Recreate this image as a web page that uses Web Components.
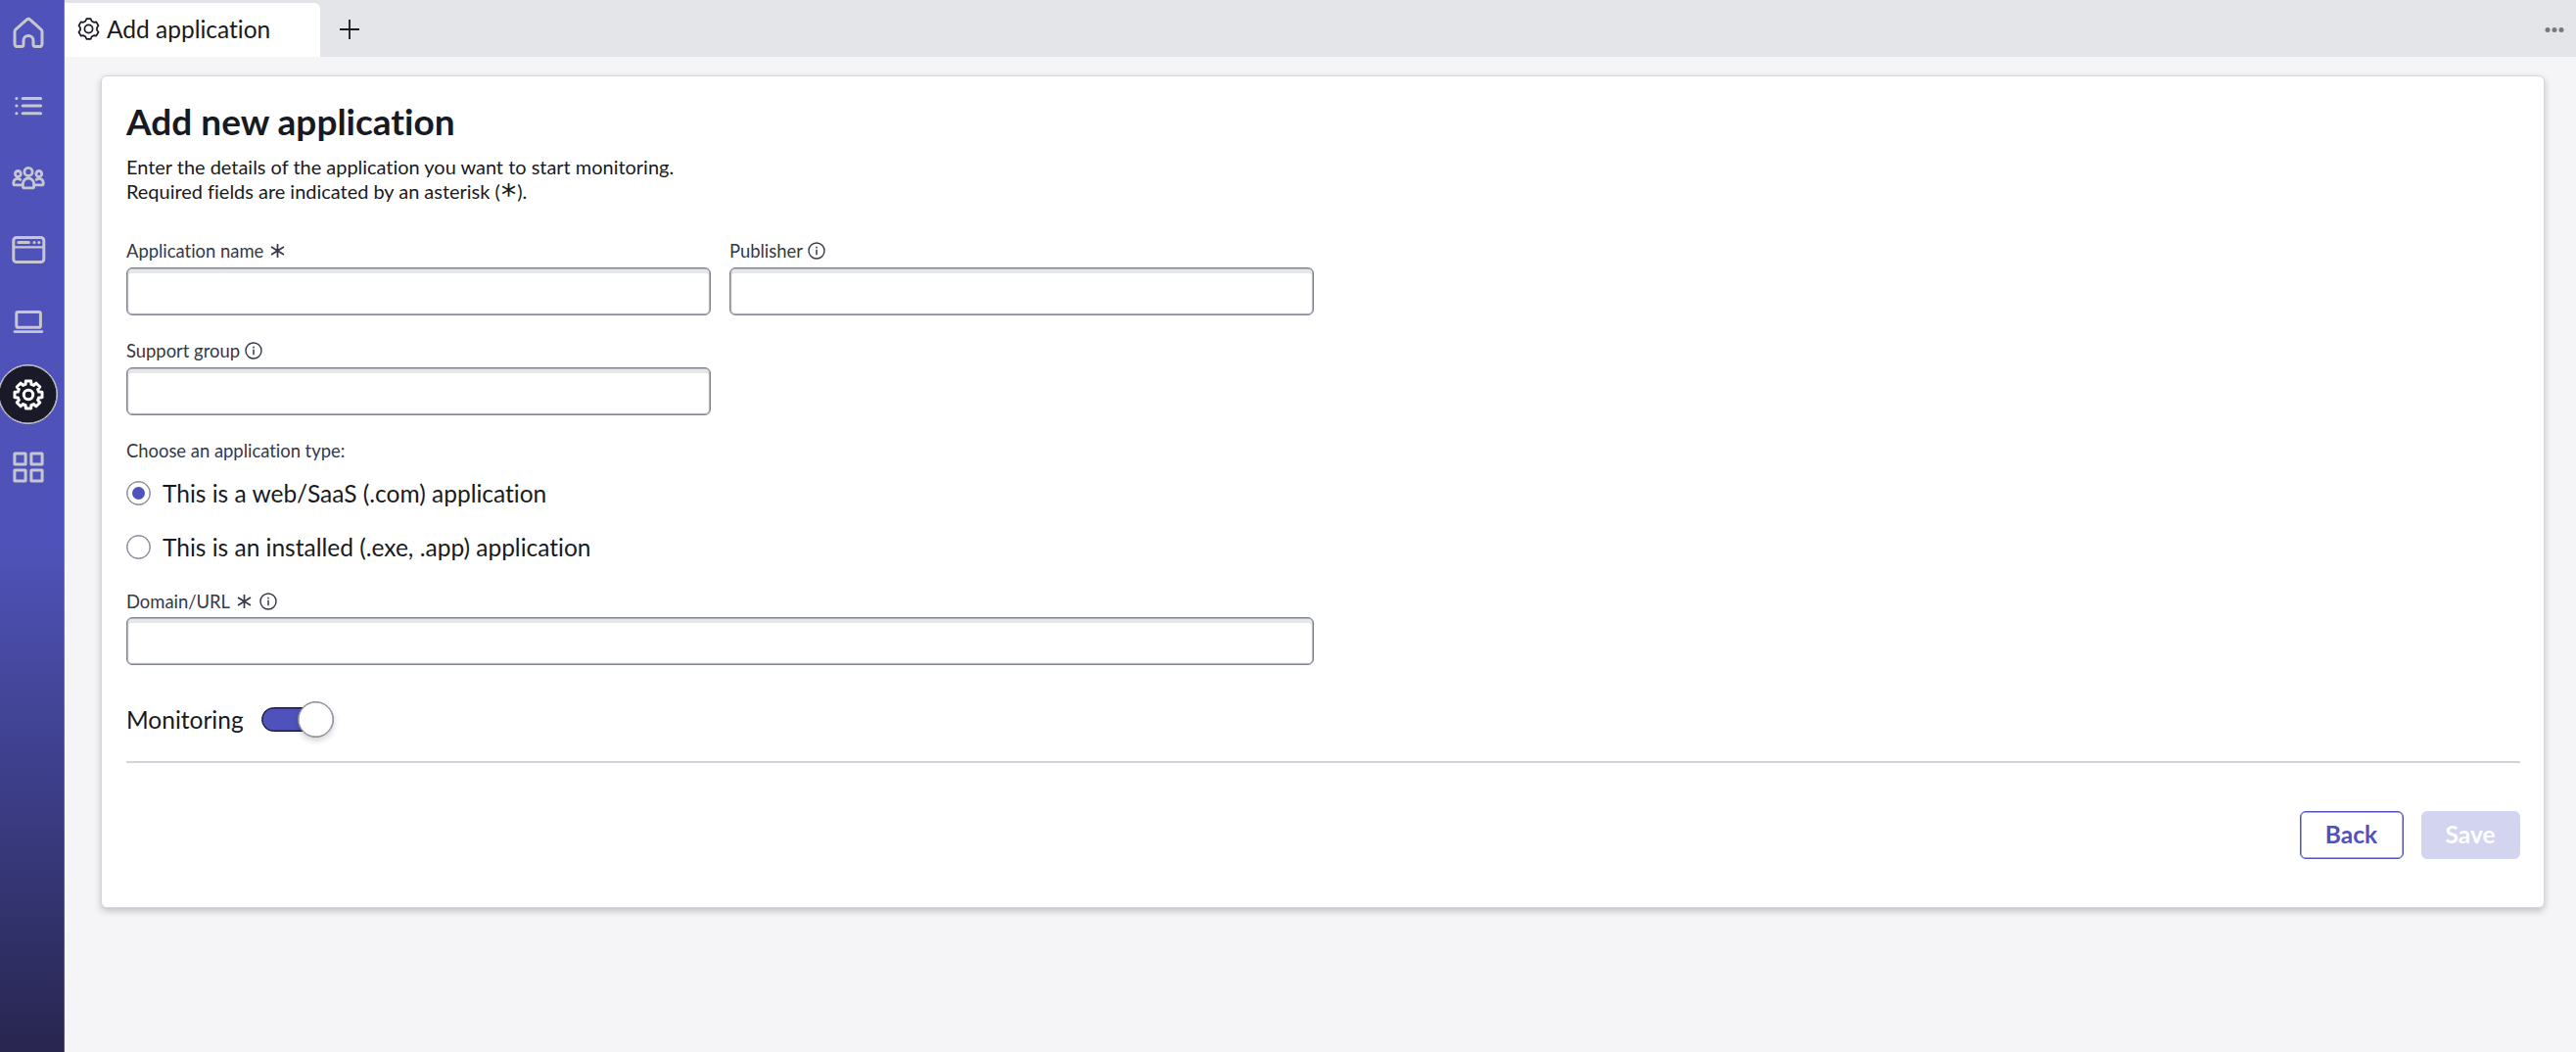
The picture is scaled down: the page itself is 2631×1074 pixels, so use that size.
<!DOCTYPE html>
<html lang="en">
<head>
<meta charset="utf-8">
<title>Add application</title>
<style>
    html, body {
        margin: 0;
        height: 100%;
        overflow: hidden;
    }
    body {
        font-family: Lato, "Liberation Sans", sans-serif;
        font-size: 24.5px;
        font-variant-ligatures: none;
        color: #181a22;
        background: #f5f5f8;
        --primary: #4f52bd;
        --line: #7f8391;
    }
</style>
</head>
<body>
<app-shell>
    <nav-rail slot="nav">
        <nav-item icon="home" label="Home"></nav-item>
        <nav-item icon="list" label="List"></nav-item>
        <nav-item icon="users" label="Users"></nav-item>
        <nav-item icon="window" label="Applications"></nav-item>
        <nav-item icon="laptop" label="Devices"></nav-item>
        <nav-item icon="gear" label="Settings" active></nav-item>
        <nav-item icon="grid" label="Dashboards"></nav-item>
    </nav-rail>
    <tab-bar slot="tabs">Add application</tab-bar>
    <form-card>
        <span slot="title">Add new application</span>
        <form-hint slot="hint"></form-hint>
        <form-row>
            <text-field label="Application name" required></text-field>
            <text-field label="Publisher" info></text-field>
        </form-row>
        <form-row>
            <text-field label="Support group" info></text-field>
        </form-row>
        <radio-list label="Choose an application type:">
            <radio-option checked>This is a web/SaaS (.com) application</radio-option>
            <radio-option>This is an installed (.exe, .app) application</radio-option>
        </radio-list>
        <form-row>
            <text-field label="Domain/URL" required info wide></text-field>
        </form-row>
        <toggle-switch>Monitoring</toggle-switch>
        <action-button slot="actions">Back</action-button>
        <action-button slot="actions" disabled>Save</action-button>
    </form-card>
</app-shell>

<script>
// closed outline of a cog, teeth spaced evenly around (c, c)
function gearPath(c, teeth, outer, root, topHalf, rootHalf) {
    var points = [];
    for (var i = 0; i < teeth; i++) {
        var a = i * 2 * Math.PI / teeth - Math.PI / 2;
        [[root, -rootHalf], [outer, -topHalf], [outer, topHalf], [root, rootHalf]].forEach(function(p) {
            var x = c + p[0] * Math.cos(a) - p[1] * Math.sin(a);
            var y = c + p[0] * Math.sin(a) + p[1] * Math.cos(a);
            points.push(x.toFixed(2) + " " + y.toFixed(2));
        });
    }
    return "M" + points.join("L") + "Z";
}

var ICONS = {
    home: `<path d="M4 16.4V29a2.6 2.6 0 0 0 2.6 2.6H11a2 2 0 0 0 2-2V25.4a5 5 0 0 1 10 0v4.2a2 2 0 0 0 2 2h4.4A2.6 2.6 0 0 0 32 29V16.4a3 3 0 0 0-1-2.2L19.8 4.2a2.7 2.7 0 0 0-3.6 0L5 14.2a3 3 0 0 0-1 2.2z"/>`,
    list: `<path d="M12.2 10.4h18.4M12.2 18h18.4M12.2 25.8h18.4M5.8 10.4h.2M5.8 18h.2M5.8 25.8h.2"/>`,
    users: `<g stroke-width="2.8"><circle cx="18" cy="12.4" r="4.1"/><circle cx="7.4" cy="14.4" r="2.9"/><circle cx="28.8" cy="14.4" r="2.9"/>
        <path d="M12.4 27.4v-2.8a5.6 5.6 0 0 1 11.2 0v2.8a1.4 1.4 0 0 1-1.4 1.4h-8.4a1.4 1.4 0 0 1-1.4-1.4zM9.8 20.4a4.2 4.2 0 0 0-7 3v1a1.4 1.4 0 0 0 1.4 1.4h7.6M26.2 20.4a4.2 4.2 0 0 1 7 3v1a1.4 1.4 0 0 1-1.4 1.4h-7.6"/></g>`,
    window: `<rect x="2.8" y="5.5" width="31" height="25" rx="3"/><path d="M3 15.4h30.6" stroke-width="2.4"/><path d="M7.8 10.4h10.6M24 10.4h.1M28.8 10.4h.1"/>`,
    laptop: `<rect x="5.8" y="7.5" width="24.6" height="15.8" rx="1.6"/><path d="M4 27.6h27.8" stroke-width="2.8"/>`,
    gear: `<path d="${gearPath(18, 8, 14, 10.7, 2.7, 2.9)}"/><circle cx="18" cy="18" r="4.7"/>`,
    grid: `<rect x="3.9" y="3.9" width="11.2" height="11.2" rx=".4"/><rect x="20.9" y="3.9" width="11.2" height="11.2" rx=".4"/><rect x="3.9" y="20.9" width="11.2" height="11.2" rx=".4"/><rect x="20.9" y="20.9" width="11.2" height="11.2" rx=".4"/>`
};

function define(name, html, setup) {
    var template = document.createElement("template");
    template.innerHTML = html;
    customElements.define(name, class extends HTMLElement {
        constructor() {
            super();
            this.attachShadow({mode: "open"}).appendChild(template.content.cloneNode(true));
        }
        connectedCallback() {
            if (setup) setup(this, this.shadowRoot);
        }
    });
}

define("app-shell", `
    <style>
        :host {
            display: grid;
            grid-template-columns: 66px 1fr;
            height: 100vh;
        }
        main {
            display: flex;
            flex-direction: column;
        }
    </style>
    <slot name="nav"></slot>
    <main><slot name="tabs"></slot><slot></slot></main>
`);

define("nav-rail", `
    <style>
        :host {
            display: flex;
            flex-direction: column;
            box-sizing: border-box;
            border-right: 1px solid rgba(255, 255, 255, .2);
            background: linear-gradient(#4f52b8 0, #4f52b8 52%, #38397c 80%, #28264f 100%);
            background-origin: border-box;
        }
        nav {
            margin-top: -3px;
        }
    </style>
    <nav><slot></slot></nav>
`);

define("nav-item", `
    <style>
        :host {
            display: flex;
            align-items: center;
            justify-content: center;
            width: 57.4px;
            height: 73.8px;
            color: #c5c6cf;
        }
        span {
            display: flex;
            align-items: center;
            justify-content: center;
            flex: none;
            box-sizing: border-box;
            width: 61px;
            height: 61px;
            border-radius: 50%;
        }
        :host([active]) span {
            color: #fff;
            background: #191927;
            border: 1px solid #d4d4de;
            box-shadow: inset 0 0 0 .5px #d4d4de;
        }
        svg {
            flex: none;
            width: 36px;
            height: 36px;
            fill: none;
            stroke: currentColor;
            stroke-width: 3;
            stroke-linecap: round;
            stroke-linejoin: round;
        }
    </style>
    <span><svg viewBox="0 0 36 36"></svg></span>
`, function(el, root) {
    root.querySelector("svg").innerHTML = ICONS[el.getAttribute("icon")];
    el.setAttribute("aria-label", el.getAttribute("label"));
});

define("tab-bar", `
    <style>
        :host {
            display: flex;
            box-sizing: border-box;
            height: 58px;
            padding-top: 3px;
            background: #e4e5e9;
        }
        .tab {
            display: flex;
            align-items: center;
            box-sizing: border-box;
            width: 261px;
            padding: 0 0 2px 13px;
            gap: 7px;
            background: #fff;
            border-radius: 0 6px 0 0;
        }
        .plus {
            margin: 16.5px 0 0 20px;
        }
        .more {
            margin: 24px 12px 0 auto;
        }
        svg {
            flex: none;
            fill: none;
            stroke: currentColor;
            stroke-linejoin: round;
        }
    </style>
    <div class="tab">
        <svg width="23" height="23" viewBox="0 0 23 23" stroke-width="1.7"><path d="${gearPath(11.5, 6, 10.3, 8, 2.2, 3.1)}"/><circle cx="11.5" cy="11.5" r="4.1"/></svg>
        <slot></slot>
    </div>
    <svg class="plus" width="20" height="20" viewBox="0 0 20 20" stroke-width="1.8"><path d="M10 0v20M0 10h20"/></svg>
    <svg class="more" width="20" height="7" viewBox="0 0 20 7"><g fill="#767780" stroke="none"><circle cx="3" cy="3.5" r="2.5"/><circle cx="10" cy="3.5" r="2.5"/><circle cx="17" cy="3.5" r="2.5"/></g></svg>
`);

define("form-card", `
    <style>
        :host {
            display: block;
            box-sizing: border-box;
            height: 850px;
            margin: 19px 32px 0 37px;
            padding: 25px 24px 0 25px;
            background: #fff;
            border: 1px solid #d5d6dd;
            border-radius: 6px;
            box-shadow: 0 3px 7px rgba(24, 26, 34, .24);
        }
        h1 {
            margin: 0;
            padding-bottom: 4px;
            font-size: 37px;
            line-height: 42px;
            font-weight: 700;
        }
        .body {
            display: flex;
            flex-direction: column;
            padding-top: 37px;
        }
        footer {
            display: flex;
            justify-content: flex-end;
            gap: 18px;
            margin-top: 24px;
            padding-top: 49px;
            border-top: 2px solid #d3d4db;
        }
    </style>
    <h1><slot name="title"></slot></h1>
    <slot name="hint"></slot>
    <div class="body"><slot></slot></div>
    <footer><slot name="actions"></slot></footer>
`);

define("form-hint", `
    <style>
        :host {
            display: block;
            margin-top: 8.5px;
            font-size: 19.95px;
            line-height: 25.4px;
        }
        p {
            margin: 0;
            height: 25.4px;
        }
        b {
            display: inline-block;
            height: 20px;
            font: 31px/30px "DejaVu Sans", sans-serif;
            vertical-align: top;
            margin: 0 1px;
        }
    </style>
    <p>Enter the details of the application you want to start monitoring.</p>
    <p>Required fields are indicated by an asterisk (<b>*</b>).</p>
`);

define("form-row", `
    <style>
        :host {
            display: flex;
            gap: 19px;
            margin-bottom: 25px;
        }
    </style>
    <slot></slot>
`);

define("text-field", `
    <style>
        :host {
            display: block;
            width: 597px;
        }
        :host([wide]) {
            width: 1213px;
        }
        label {
            display: flex;
            align-items: center;
            gap: 5px;
            box-sizing: border-box;
            height: 27.7px;
            padding-bottom: 6px;
            font-size: 18.4px;
            line-height: 22px;
            color: #343847;
        }
        svg {
            display: none;
        }
        .star {
            margin: 0 3px 0 2px;
        }
        :host([required]) .star, :host([info]) .info {
            display: block;
        }
        input {
            display: block;
            box-sizing: border-box;
            width: 100%;
            height: 49px;
            margin: 0;
            padding: 0 12px;
            font: inherit;
            background: #fff;
            border: 1px solid var(--line);
            border-radius: 6px;
            outline: none;
            box-shadow: inset 0 0 0 .5px var(--line), inset 0 5px 0 #e6e7e8, inset 0 0 0 1.5px #e6e7e8;
        }
    </style>
    <label><span class="text"></span>
        <svg class="star" width="15" height="16" viewBox="0 0 15 16" fill="none" stroke="currentColor" stroke-width="1.7"><path d="M7.5 1v14M1 4l13 8M14 4L1 12"/></svg>
        <svg class="info" width="18" height="18" viewBox="0 0 18 18" fill="none" stroke="currentColor" stroke-width="1.4"><circle cx="9" cy="9" r="8"/><path d="M9 7.8v5.4M9 4.8v1.6" stroke-width="1.5"/></svg>
    </label>
    <input type="text">
`, function(el, root) {
    root.querySelector(".text").textContent = el.getAttribute("label");
});

define("radio-list", `
    <style>
        :host {
            display: flex;
            flex-direction: column;
            margin-bottom: 16px;
        }
        .caption {
            height: 27px;
            font-size: 18.4px;
            line-height: 22px;
            color: #343847;
        }
    </style>
    <div class="caption"></div>
    <slot></slot>
`, function(el, root) {
    root.querySelector(".caption").textContent = el.getAttribute("label");
});

define("radio-option", `
    <style>
        :host {
            display: flex;
            align-items: center;
            gap: 12px;
            height: 55.5px;
        }
        i {
            display: flex;
            align-items: center;
            justify-content: center;
            box-sizing: border-box;
            width: 25px;
            height: 25px;
            border: 1px solid var(--line);
            border-radius: 50%;
            box-shadow: inset 0 0 0 .5px var(--line);
        }
        :host([checked]) i::after {
            content: "";
            width: 13px;
            height: 13px;
            border-radius: 50%;
            background: var(--primary);
        }
    </style>
    <i></i><span><slot></slot></span>
`);

define("toggle-switch", `
    <style>
        :host {
            display: flex;
            align-items: center;
            gap: 18px;
            height: 37px;
            margin-top: 12px;
        }
        .track {
            display: flex;
            align-items: center;
            justify-content: flex-end;
            box-sizing: border-box;
            width: 73px;
            height: 25px;
            border: 1px solid #191a2c;
            border-radius: 13px;
            background: var(--primary);
            box-shadow: inset 0 0 0 .5px #191a2c;
        }
        .knob {
            flex: none;
            box-sizing: border-box;
            width: 37px;
            height: 37px;
            margin-right: -2px;
            border: 1px solid var(--line);
            border-radius: 50%;
            background: #fff;
            box-shadow: inset 0 0 0 .5px var(--line), 0 3px 6px rgba(24, 26, 34, .2);
        }
    </style>
    <span><slot></slot></span>
    <div class="track"><div class="knob"></div></div>
`);

define("action-button", `
    <style>
        :host {
            display: block;
        }
        button {
            box-sizing: border-box;
            width: 106px;
            height: 49px;
            padding: 0 1px 1px 0;
            font: 700 24.5px/30px Lato, sans-serif;
            color: var(--primary);
            background: #fff;
            border: 1px solid var(--primary);
            border-radius: 6px;
            box-shadow: inset 0 0 0 .5px var(--primary);
        }
        :host([disabled]) button {
            width: 101px;
            color: #fff;
            background: #d3d4ef;
            border-color: #d3d4ef;
            box-shadow: none;
        }
    </style>
    <button><slot></slot></button>
`);
</script>
</body>
</html>
